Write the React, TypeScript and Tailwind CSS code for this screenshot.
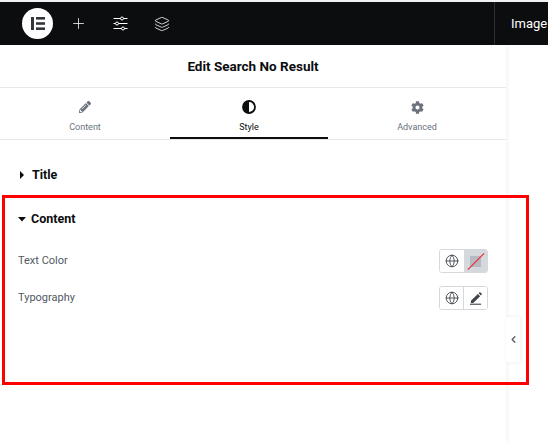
import React from "react";
import { Plus, Layers, Globe, ChevronLeft } from "lucide-react";
import { FaCog, FaPencilAlt } from "react-icons/fa";

const Tab = ({ w, label, active, children }: { w: string; label: string; active?: boolean; children: React.ReactNode }) => (
  <div className={`${w} flex h-full flex-col items-center border-b-2 pt-[11px] ${active ? "border-[#0c0d0e] text-[#0c0d0e]" : "border-transparent text-[#69727d]"}`}>
    <div className="flex h-[16px] items-center justify-center">{children}</div>
    <span className="mt-[5px] text-[9px] leading-[14px]">{label}</span>
  </div>
);

const Caret = ({ open }: { open?: boolean }) => (
  <svg width="8" height="8" viewBox="0 0 8 8" className="shrink-0 text-[#0c0d0e]" fill="currentColor">
    {open ? <path d="M0 2h8L4 6.5z" /> : <path d="M2 0v8l4-4z" />}
  </svg>
);

const App: React.FC = () => {
  return (
    <div className="relative h-[443px] w-[548px] overflow-hidden bg-white font-['Roboto',sans-serif]">
      <div className="h-[2px] bg-[#f1f2f3]" />
      <header className="flex h-[43px] items-center bg-[#0c0d0e] text-white">
        <div className="ml-[22px] flex h-[31px] w-[31px] items-center justify-center rounded-full bg-white">
          <svg width="14" height="13" viewBox="0 0 14 13" fill="#33373d">
            <rect x="0" y="0" width="3" height="13" />
            <rect x="5" y="0" width="9" height="2.6" />
            <rect x="5" y="5.2" width="9" height="2.6" />
            <rect x="5" y="10.4" width="9" height="2.6" />
          </svg>
        </div>
        <Plus size={17} strokeWidth={1.1} className="ml-[17px]" />
        <svg width="15" height="15" viewBox="0 0 15 15" fill="none" stroke="currentColor" strokeWidth="1" className="ml-[26px]">
          <path d="M0.5 2.5h7M10.5 2.5h4M0.5 7.5h2M5.5 7.5h9M0.5 12.5h8M11.5 12.5h3" />
          <circle cx="9" cy="2.5" r="1.5" />
          <circle cx="4" cy="7.5" r="1.5" />
          <circle cx="10" cy="12.5" r="1.5" />
        </svg>
        <Layers size={16} strokeWidth={1.2} className="ml-[26px]" />
        <div className="ml-auto flex h-full w-[54px] items-center border-l border-[#2d2f32] pl-[16px] text-[13px] whitespace-nowrap">
          Image
        </div>
      </header>

      <div className="flex h-[398px]">
        <main className="w-[506px] shrink-0 shadow-[0_0_6px_rgba(0,0,0,0.08)]">
          <div className="flex h-[43px] items-center justify-center border-b border-[#e6e8ea] text-[13.5px] font-bold text-[#0c0d0e]">
            Edit Search No Result
          </div>
          <div className="flex h-[52px] border-b border-[#e6e8ea]">
            <Tab w="w-[170px]" label="Content">
              <FaPencilAlt size={12} />
            </Tab>
            <Tab w="w-[158px]" label="Style" active>
              <svg width="14" height="14" viewBox="0 0 14 14">
                <circle cx="7" cy="7" r="6" fill="none" stroke="currentColor" strokeWidth="1.8" />
                <path d="M7 1a6 6 0 0 0 0 12z" fill="currentColor" />
              </svg>
            </Tab>
            <Tab w="w-[178px]" label="Advanced">
              <FaCog size={13} />
            </Tab>
          </div>

          <div className="flex items-center gap-[6px] pt-[27px] pl-[18px] text-[12.5px] leading-[16px] font-bold text-[#0c0d0e]">
            <Caret />
            <span>Title</span>
          </div>
          <div className="mt-[28px] flex items-center gap-[5px] pl-[18px] text-[12.5px] leading-[16px] font-bold text-[#0c0d0e]">
            <Caret open />
            <span>Content</span>
          </div>

          <div className="mt-[22px] flex h-[24px] items-center justify-between pr-[18px] pl-[18px] text-[11px] text-[#515962]">
            <span>Text Color</span>
            <div className="flex h-[24px] w-[49px] overflow-hidden rounded-[3px] border border-[#d5d8dc]">
              <div className="flex w-[24px] items-center justify-center bg-white">
                <Globe size={14} strokeWidth={1.5} className="text-[#3f444b]" />
              </div>
              <div className="relative flex flex-1 items-center justify-center bg-[#d5d8dc]">
                <div className="h-[11px] w-[11px] bg-[#b6bac0]" />
                <svg className="absolute inset-0 h-full w-full" viewBox="0 0 24 22">
                  <line x1="4" y1="20" x2="21" y2="3" stroke="#ef2b3c" strokeWidth="1.2" />
                </svg>
              </div>
            </div>
          </div>
          <div className="mt-[13px] flex h-[24px] items-center justify-between pr-[18px] pl-[18px] text-[11px] text-[#515962]">
            <span>Typography</span>
            <div className="flex h-[24px] w-[49px] overflow-hidden rounded-[3px] border border-[#d5d8dc]">
              <div className="flex w-[24px] items-center justify-center border-r border-[#d5d8dc] bg-white">
                <Globe size={14} strokeWidth={1.5} className="text-[#3f444b]" />
              </div>
              <div className="flex flex-1 items-center justify-center bg-white">
                <svg width="12" height="13" viewBox="0 0 13 14" fill="#3f444b">
                  <path d="M1 9.5 8.5 2l2.5 2.5L3.5 12H1z" />
                  <path d="M9.3 1.2 10 .5a1 1 0 0 1 1.4 0l1.1 1.1a1 1 0 0 1 0 1.4l-.7.7z" />
                  <rect x="0" y="12.6" width="12" height="1.2" />
                </svg>
              </div>
            </div>
          </div>
        </main>

        <div className="mt-[272px] flex h-[45px] w-[14px] items-center justify-center bg-white shadow-[1px_0_4px_rgba(0,0,0,0.08)]">
          <ChevronLeft size={11} strokeWidth={2.8} className="text-[#515962]" />
        </div>
      </div>

      {/* red annotation box on top of the panel */}
      <div className="pointer-events-none absolute top-[195px] left-[2px] h-[190px] w-[527px] border-[3px] border-[#ff0000]" />
    </div>
  );
};

export default App;
